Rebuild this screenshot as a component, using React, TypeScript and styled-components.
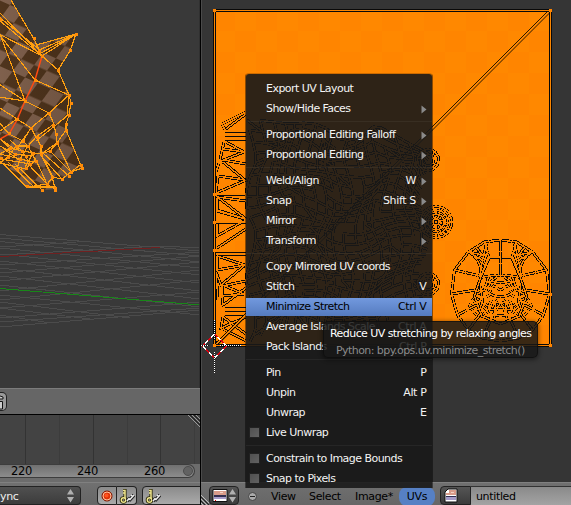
import React from "react";
import styled, { createGlobalStyle } from "styled-components";

const Global = createGlobalStyle`
  body { margin: 0; background: #393939; overflow: hidden; }
  * { box-sizing: border-box; }
`;

const Screen = styled.div`
  position: relative;
  display: grid;
  grid-template-columns: 200px 1fr;
  width: 571px;
  height: 505px;
  overflow: hidden;
  font: 11px/20px "DejaVu Sans", sans-serif;
  letter-spacing: -0.35px;
  color: #000;
  cursor: default;
  white-space: pre;
`;
const LeftColumn = styled.div`
  display: grid;
  grid-template-rows: 388px 27px 67px 23px;
  min-width: 0;
  overflow: hidden;
`;
const RightColumn = styled.div`
  display: grid;
  grid-template-rows: 482px 23px;
  border-left: 1px solid #000;
  min-width: 0;
  overflow: hidden;
`;
const Canvas = styled.svg`
  display: block;
`;
const PlainHeader = styled.div`
  background: #666;
  border-top: 1px solid #7c7c7c;
  border-bottom: 1px solid #000;
  padding-top: 3px;
`;
const CutButton = styled.div`
  width: 7px;
  height: 19px;
  background: #999;
  border: 1px solid #222;
  border-left: 0;
  border-radius: 0 5px 5px 0;
`;
const Timeline = styled.div`
  display: grid;
  grid-template-rows: 49px 14px 4px;
  background: #6c6c6c;
`;
const Scrollbar = styled.div`
  display: flex;
  align-items: center;
  width: 195px;
  height: 14px;
  background: linear-gradient(#707070, #8c8c8c);
  border: 1px solid #3d3d3d;
  border-left: 0;
  border-radius: 0 7px 7px 0;
  font-size: 11.5px;
  line-height: 12px;
`;
const Tick = styled.span<{ $gap: number }>`
  margin-left: ${(p) => p.$gap}px;
  width: 21px;
`;
const Knob = styled.span`
  width: 10px;
  height: 10px;
  margin-left: auto;
  margin-right: 1px;
  border-radius: 50%;
  background: #626262;
  border: 1px solid #4d4d4d;
`;
const Header = styled.div`
  display: flex;
  align-items: flex-start;
  padding-top: 3px;
  background: linear-gradient(#707070, #666);
  border-top: 1px solid #808080;
  overflow: hidden;
`;
const SyncSelect = styled.div`
  flex: none;
  display: flex;
  justify-content: space-between;
  width: 81px;
  height: 19px;
  padding-right: 5px;
  border: 1px solid #222;
  border-left: 0;
  border-radius: 0 4px 4px 0;
  background: linear-gradient(#505050, #3c3c3c);
  color: #eee;
`;
const IconButton = styled.div<{ $w: number; $gap?: number; $left?: boolean; $right?: boolean; $dark?: boolean }>`
  flex: none;
  display: flex;
  align-items: center;
  padding-left: 2px;
  width: ${(p) => p.$w}px;
  height: 19px;
  margin-left: ${(p) => p.$gap ?? 0}px;
  border: 1px solid #222;
  border-left-width: ${(p) => (p.$left ? 1 : 0)}px;
  border-radius: ${(p) => `${p.$left ? 4 : 0}px ${p.$right ? 4 : 0}px ${p.$right ? 4 : 0}px ${p.$left ? 4 : 0}px`};
  background: ${(p) => (p.$dark ? "linear-gradient(#555, #3b3b3b)" : "linear-gradient(#8b8b8b, #aaa)")};
`;
const HeaderLabel = styled.span<{ $w: number }>`
  flex: none;
  width: ${(p) => p.$w}px;
  margin-top: 2px;
  line-height: 18px;
`;
const Collapse = styled.svg`
  flex: none;
  margin-right: 8px;
`;
const ActivePill = styled.span`
  flex: none;
  width: 36px;
  height: 19px;
  margin-top: 1px;
  border-radius: 8px;
  background: #5680c4;
  text-align: center;
  line-height: 20px;
`;
const NameField = styled.div`
  flex: 1;
  height: 19px;
  padding-left: 5px;
  border-top: 1px solid #333;
  background: linear-gradient(#8a8a8a, #a3a3a3);
`;

const Menu = styled.div`
  position: absolute;
  left: 245px;
  top: 73px;
  width: 188px;
  height: 415px;
  padding-top: 5px;
  overflow: hidden;
  border: 1px solid rgba(0, 0, 0, 0.45);
  border-top-color: rgba(0, 0, 0, 0.2);
  border-bottom: 0;
  border-radius: 4px 4px 0 0;
  background: rgba(25, 25, 25, 0.91);
  background-clip: padding-box;
  letter-spacing: -0.54px;
  color: #f4f4f4;
`;
const MenuGroup = styled.div`
  & + & {
    border-top: 1px solid rgba(255, 255, 255, 0.05);
    margin-top: 2px;
    padding-top: 3px;
  }
`;
const MenuRow = styled.div<{ $active?: boolean }>`
  display: flex;
  align-items: center;
  height: ${(p) => (p.$active ? 18 : 20)}px;
  margin: ${(p) => (p.$active ? "1px 0" : "0")};
  color: ${(p) => (p.$active ? "#000" : "inherit")};
  background: ${(p) => (p.$active ? "linear-gradient(#7299de, #557bbf)" : "none")};
`;
const Gutter = styled.span`
  width: 20px;
  padding-left: 3px;
  flex: none;
`;
const Checkbox = styled.span`
  display: block;
  width: 11px;
  height: 11px;
  margin-top: -2px;
  border: 1px solid #222;
  background: linear-gradient(135deg, #505050, #626262);
`;
const Shortcut = styled.span<{ $sub?: boolean }>`
  margin-left: auto;
  margin-right: ${(p) => (p.$sub ? 5 : 5.5)}px;
  letter-spacing: -0.35px;
`;
const Arrow = styled.svg`
  width: 6px;
  height: 9px;
  margin-right: 5px;
`;
const Tooltip = styled.div`
  position: absolute;
  left: 323px;
  top: 321px;
  width: 215px;
  height: 37px;
  padding: 3px 0 0 6px;
  border-radius: 5px;
  border: 1px solid rgba(10, 10, 10, 0.6);
  background: rgba(24, 24, 24, 0.85);
  box-shadow: 0 1px 4px 1px rgba(0, 0, 0, 0.4);
  line-height: 17px;
  letter-spacing: -0.56px;
  color: #fff;
`;
const TooltipCode = styled.div`
  padding-left: 6px;
  color: #8b8b8b;
`;

type Item = { label: string; key?: string; sub?: boolean; check?: boolean; active?: boolean };
const groups: Item[][] = [
  [{ label: "Export UV Layout" }, { label: "Show/Hide Faces", sub: true }],
  [{ label: "Proportional Editing Falloff", sub: true }, { label: "Proportional Editing", sub: true }],
  [
    { label: "Weld/Align", key: "W", sub: true },
    { label: "Snap", key: "Shift S", sub: true },
    { label: "Mirror", sub: true },
    { label: "Transform", sub: true },
  ],
  [
    { label: "Copy Mirrored UV coords" },
    { label: "Stitch", key: "V" },
    { label: "Minimize Stretch", key: "Ctrl V", active: true },
    { label: "Average Islands Scale", key: "Ctrl A" },
    { label: "Pack Islands", key: "Ctrl P" },
  ],
  [
    { label: "Pin", key: "P" },
    { label: "Unpin", key: "Alt P" },
    { label: "Unwrap", key: "E" },
    { label: "Live Unwrap", check: true },
  ],
  [{ label: "Constrain to Image Bounds", check: true }, { label: "Snap to Pixels", check: true }],
];

const headOutline =
  "-2,-2 11,0 34,39 37,45 76,34 70,51 58,70 69,95 71,103 69,115 66,130 82,168 71,172 69,176 62,179 52,177 56,189 42,190 27,187 -2,160";
const headEdges = `M11 0L34 39L42 56M-1 12L42 56M-1 17L40 50M-1 20L41 55M-1 34L42 56M36 45L76 34M39 50L76 34M41 53L76 34M42 56L76 34
M76 34L70 51L58 70L42 56M70 51L73 42M58 70L69 95L71 103L69 115L66 124L66 130L82 168M35 80L69 95M69 95L67 116M69 95L49 113M-1 34L35 80
M0 34L25 101M-1 84L25 101M-1 97L25 101L49 113L54 124L56 134L57 143L41 154M49 113L31 128L36 137L54 124M0 108L17 119L31 128L23 141L9 134
M-1 122L9 134M17 119L0 131M31 128L16 150L0 139M36 137L41 146L41 154M36 137L28 146L16 146M67 116L36 141M66 130L57 143L71 172M57 143L50 151L71 172M50 151L41 154L53 177
M71 172L82 168M80 165L71 172M71 172L62 179L52 177L55 188M69 176L44 154M62 179L41 156M52 177L41 154M53 177L47 184L35 158M47 184L28 164M42 190L15 164M35 188L8 162M27 187L-1 160
M27 187L56 187M0 161L26 187M56 190L47 184L28 187M0 139L10 148L23 151L33 153L41 154M0 146L15 154L31 156M0 154L20 159L34 162M0 159L19 162L30 164M0 163L26 169M10 148L0 154M16 146L8 157L0 163M23 141L28 146L20 159L17 169M33 153L25 167M36 160L26 168M28 146L37 163M10 140L22 151L31 165M4 149L19 160`;
const headDots: number[][] = [
  [76, 34], [34, 38], [39, 51], [42, 56], [70, 50], [58, 70], [69, 95], [71, 103], [69, 115], [66, 124], [66, 130],
  [35, 80], [25, 101], [49, 113], [53, 125], [56, 134], [57, 143], [31, 128], [37, 137], [17, 119], [9, 133],
  [23, 141], [16, 146], [28, 146], [10, 148], [41, 146], [22, 151], [33, 153], [41, 154], [50, 151], [15, 154],
  [26, 156], [8, 157], [20, 159], [36, 161], [30, 164], [26, 168], [17, 169], [82, 168], [81, 165], [71, 172],
  [69, 176], [62, 179], [52, 177], [47, 184], [55, 188], [55, 190], [42, 190], [27, 186], [0, 19], [1, 158],
];

const gridLines = [
  "M0 234.5L200 251", "M0 238L200 256", "M0 241.5L200 262", "M0 248L200 268", "M0 254L200 275", "M0 261L200 283",
  "M0 268L200 291", "M0 276L200 299", "M0 285L200 307", "M0 295L200 315", "M0 302L130 318", "M0 308L90 319", "M0 315L50 323",
  "M0 247L50 244L90 241", "M0 255L160 246L200 248", "M0 265L200 252", "M0 273L200 256", "M0 281L200 262",
  "M0 291L200 270", "M0 300L200 280", "M0 308L200 292", "M0 318L200 302", "M0 327L200 310", "M0 322L200 308",
].join("");

const fan = `M222 124L246 112M226 129L246 114M222 124L225 130M225 131H246M225 135H246M225 139H246M224 142L220 160
M223 149L244 152L226 142M221 161L244 152M223 160L246 164M223 162L245 180L218 176M219 163L216 172M218 176L216 193L244 181
M214 194H246M217 197L246 201M216 196L246 219L217 210V198M214 222H246M217 224V236L246 220M217 211L245 219M217 248L246 229M214 251H246M214 254H246
M217 256L245 265L217 270V256M216 272L221 285L244 266M220 284L244 294L222 296V286L246 281M222 296L223 305L246 288
M225 306H246M225 310H246M225 314H246M223 317L221 328L246 317M223 317L246 334M214 346L246 315M223 329L246 341M216 272L218 300`;

function wobble(x: number, y: number): [number, number] {
  return [x + 5 * Math.sin(y / 13 + x / 29) + 2 * Math.sin(x / 7), y + 6 * Math.sin(x / 17) + 3 * Math.cos(y / 9 + x / 12)];
}
function buildIsland(): string {
  const parts: string[] = [];
  const cols = 18;
  const rows = 24;
  const at = (i: number, j: number) => {
    const x = 253 + i * 9.6;
    const spread = 1 - 0.12 * Math.sin((i / cols) * Math.PI) - (i > 13 ? (i - 13) * 0.07 : 0);
    return wobble(x, 229 + (j - rows / 2) * 9.2 * spread).map((v) => v.toFixed(1)).join(" ");
  };
  for (let i = 0; i < cols; i++)
    for (let j = 0; j < rows; j++) {
      if ((i * 7 + j * 3) % 11 !== 0) parts.push(`M${at(i, j)}L${at(i + 1, j)}`);
      if ((i * 5 + j * 2) % 9 !== 0) parts.push(`M${at(i, j)}L${at(i, j + 1)}`);
      if ((i * 3 + j * 5) % 13 === 0) parts.push(`M${at(i, j)}L${at(i + 1, j + 1)}`);
    }
  return parts.join("");
}
function buildRosette(cx: number, cy: number, radii: number[], spokes: number): string {
  const parts: string[] = [];
  const pt = (r: number, k: number) => {
    const a = (k / spokes) * Math.PI * 2;
    return `${(cx + r * Math.sin(a)).toFixed(1)} ${(cy - r * Math.cos(a)).toFixed(1)}`;
  };
  radii.forEach((r, n) => {
    for (let k = 0; k < spokes; k++) {
      parts.push(`M${pt(r, k)}L${pt(r, k + 1)}`);
      if (n > 0 && (k + n) % 2 === 0) parts.push(`M${pt(radii[n - 1], k)}L${pt(r, k)}`);
    }
  });
  return parts.join("");
}

const faceHalf = `M0 -50L16 -48L32 -38L46 -20L49 4L43 25L32 40L18 48L0 51M0 -33L11 -33L20 -12L26 6L19 26L0 34M0 -50V-15M16 -48L12 -34L20 -12M14 -46L18 -30L21 -13
M32 -38L17 -29M32 -38L18 -35M25 -43L18 -35L24 -31L31 -40M23 -30L18 -18M46 -20L20 -14M49 4L25 0M43 25L24 15M32 40L20 24M18 48L10 30`;
const faceDetail = `M0 -15L12 -14L20 -12M12 -13L16 0L26 6M0 -7L9 -9L15 1L10 11L0 13M4 -13L9 -9M0 0L7 -4L12 4M0 7L8 5L15 1M3 10L8 17L17 14L26 6
M0 20L12 19L19 26M0 26L10 25L17 17M10 11L12 19M5 13L6 28M20 -4L18 12L22 21M0 13L5 22L12 31M22 17L28 10L31 16L24 25`;

const rosettes = [
  buildRosette(436, 222, [3, 8, 12, 16], 14),
  buildRosette(428, 160, [6, 11], 9),
  buildRosette(428, 284, [6, 11], 9),
].join("");

const DoubleStroke = ({ d, transform, dash }: { d: string; transform?: string; dash?: string }) => (
  <g transform={transform} fill="none" shapeRendering="crispEdges" strokeDasharray={dash}>
    <path d={d} stroke="#090909" strokeWidth="3" />
    <path d={d} stroke="#fb8500" strokeWidth="1.4" strokeDasharray="none" />
  </g>
);

const Viewport3D = () => (
  <Canvas width="200" height="388" viewBox="0 0 200 388">
    <defs>
      <pattern id="fur" width="28" height="30" patternUnits="userSpaceOnUse" patternTransform="translate(10 5) rotate(24) skewX(-12)">
        <path d="M0 0H28V30H0Z" fill="#50351d" />
        <path d="M0 0H14V15H0ZM14 15H28V30H14Z" fill="#80614d" />
      </pattern>
      <linearGradient id="furShade" x2="1">
        <stop offset="0" stopColor="#000" stopOpacity="0" />
        <stop offset="1" stopColor="#221409" stopOpacity=".2" />
      </linearGradient>
    </defs>
    <path d="M0 0H200V388H0Z" fill="#393939" />
    <path d={gridLines} fill="none" stroke="#4b4b4b" shapeRendering="crispEdges" />
    <path d="M0 256.5L160 247.5" stroke="#702020" shapeRendering="crispEdges" />
    <path d="M0 288.5L200 305" stroke="#188718" shapeRendering="crispEdges" />
    <polygon points={headOutline} fill="url(#fur)" />
    <polygon points={headOutline} fill="url(#furShade)" />
    <path d={headEdges} fill="none" stroke="#ffa010" strokeWidth="1.15" shapeRendering="crispEdges" />
    <path d="M42 56L35 80L25 101L17 120L9 134L0 139" fill="none" stroke="#ff4a12" strokeWidth="1.5" />
    {headDots.map(([x, y]) => (
      <rect key={`${x}-${y}`} x={x - 1} y={y - 1} width="3" height="3" fill="#ff8c08" />
    ))}
    <path d="M199.5 0V388" stroke="#303030" />
  </Canvas>
);

const UVCanvas = () => (
  <Canvas width="370" height="482" viewBox="201 0 370 482">
    <defs>
      <pattern id="check" width="42" height="42" patternUnits="userSpaceOnUse" x="214" y="10">
        <path d="M0 0H21V21H0ZM21 21H42V42H21Z" fill="#ff7800" opacity=".16" />
      </pattern>
    </defs>
    <path d="M201 0H571V482H201Z" fill="#353535" />
    <path d="M201.5 0V482" stroke="#4a4a4a" />
    <path d="M214 10H551V346H214Z" fill="#ff8800" />
    <path d="M214 10H551V346H214Z" fill="url(#check)" />
    <DoubleStroke d={fan + buildIsland()} />
    <DoubleStroke d={rosettes} dash="3 1.5" />
    <path d="M549 10L213 346M551.5 11L215.5 347" stroke="#100a00" strokeWidth="0.9" />
    {["translate(500.5 290)", "translate(500.5 290) scale(-1 1)"].map((t) => (
      <React.Fragment key={t}>
        <DoubleStroke d={faceDetail} transform={t} dash="4 2" />
        <DoubleStroke d={faceHalf} transform={t} dash="11 1" />
      </React.Fragment>
    ))}
    <DoubleStroke d="M214.5 10.5H550.5V345.5H214.5Z" />
    {[[214, 10], [550, 10], [550, 345], [214, 345], [214, 194], [214, 222], [214, 250], [550, 294]].map(([x, y]) => (
      <rect key={`${x}-${y}`} x={x - 1} y={y - 1} width="3" height="3" fill="#ff8400" />
    ))}
    <g fill="none" shapeRendering="crispEdges">
      <path d="M214.5 334L226.5 346L214.5 358L202.5 346Z" stroke="#fff" />
      <path d="M214.5 334L226.5 346L214.5 358L202.5 346Z" stroke="#e00010" strokeDasharray="4.2 4.2" />
      <path d="M214.5 320V340M214.5 352V373M201 345.5H209M220 345.5H241" stroke="#111" />
      <path d="M214.5 320V340M214.5 352V373M201 345.5H209M220 345.5H241" stroke="#fff" strokeDasharray="1 1" />
    </g>
  </Canvas>
);

const TimelineGrid = () => (
  <Canvas width="200" height="49" viewBox="0 0 200 49">
    <path d="M0 0H200V49H0Z" fill="#434343" />
    <path d="M25.5 0V49M93.5 0V49M160.5 0V49" stroke="#333" />
    <path d="M59.5 0V49M127.5 0V49M194.5 0V49" stroke="#3c3c3c" />
    <path d="M188 0L200 12M192 0L200 8M196 0L200 4" stroke="#999" />
    <path d="M190 0L200 10M194 0L200 6" stroke="#222" />
  </Canvas>
);

const KeyIcon = () => (
  <svg width="16" height="16" viewBox="0 0 16 16" fill="none">
    <path d="M4 2.5H6V10" stroke="#2c2908" strokeWidth="3.2" />
    <circle cx="4.5" cy="12" r="2.3" stroke="#2c2908" strokeWidth="3" />
    <path d="M4 2.5H6V10M6 5H4" stroke="#f0e68e" strokeWidth="1.5" />
    <circle cx="4.5" cy="12" r="2.2" stroke="#f0e68e" strokeWidth="1.4" />
    <path d="M8 13L10 11L11 11.5L15 7" stroke="#222" strokeWidth="3.6" />
    <path d="M8 13L10 10.5L11 11.5L15 7M12 7L14 9" stroke="#eee" strokeWidth="1.5" />
  </svg>
);
const RecordIcon = () => (
  <svg width="14" height="14" viewBox="0 0 14 14">
    <circle cx="7" cy="7" r="5" fill="#df3208" stroke="#7b1600" />
    <circle cx="7" cy="7" r="4" fill="none" stroke="#ffc3a0" />
    <circle cx="6.5" cy="6.5" r="2" fill="#ff5420" />
  </svg>
);
const UpDown = () => (
  <svg width="9" height="17" viewBox="0 0 9 17" fill="#b0b0b0">
    <path d="M1 7.5L4.5 2L8 7.5ZM1 10L4.5 15.500L8 10Z" />
  </svg>
);
const ImageIcon = ({ page }: { page?: boolean }) => (
  <svg width="16" height="15" viewBox="0 0 16 15">
    <path d={page ? "M5 1H14V14H2V4Z" : "M1 1.5H15V13.5H1Z"} fill="#fff" stroke="#111" />
    <path d={page ? "M6 2H13V7H3V5H6Z" : "M2 3H14V7H2Z"} fill="#d99c8a" />
    <path d={page ? "M3 8H13V9H3Z" : "M2 7H14V9H2Z"} fill="#343052" />
    <path d={page ? "M3 9H13V12H3Z" : "M2 9H14V11H2Z"} fill="#a59bc8" />
    {!page && <path d="M3 12H4V13H3Z" fill="#e00" />}
    <path d="M8 4H11V5H8Z" fill="#f3d2c4" />
  </svg>
);

export default function App() {
  return (
    <>
      <Global />
      <Screen>
        <LeftColumn>
          <Viewport3D />
          <PlainHeader>
            <CutButton>
              <Canvas width="5" height="17" viewBox="0 0 5 17">
                <path d="M0 3L3 4V6H0M0 8.5H2.5V16H0" fill="#ccc" stroke="#111" />
              </Canvas>
            </CutButton>
          </PlainHeader>
          <Timeline>
            <TimelineGrid />
            <Scrollbar>
              <Tick $gap={11}>220</Tick>
              <Tick $gap={45}>240</Tick>
              <Tick $gap={46}>260</Tick>
              <Knob />
            </Scrollbar>
          </Timeline>
          <Header>
            <SyncSelect>
              ync
              <UpDown />
            </SyncSelect>
            <IconButton $w={20} $gap={16} $left>
              <RecordIcon />
            </IconButton>
            <IconButton $w={20} $right>
              <KeyIcon />
            </IconButton>
            <IconButton $w={62} $gap={5} $left>
              <KeyIcon />
            </IconButton>
          </Header>
        </LeftColumn>
        <RightColumn>
          <UVCanvas />
          <Header>
            <svg width="8" height="20" viewBox="0 0 8 20">
              <path d="M0 9L9 18M0 13L7 20M0 17L3 20" stroke="#bbb" />
              <path d="M0 11L8 19M0 15L5 20" stroke="#222" />
            </svg>
            <IconButton $w={30} $left $right $dark>
              <ImageIcon />
              <UpDown />
            </IconButton>
            <Collapse width="24" height="20" viewBox="0 0 24 20">
              <circle cx="13.500" cy="10.500" r="4" fill="#aaa" stroke="#444" />
              <path d="M11 10.5H16" stroke="#222" />
            </Collapse>
            <HeaderLabel $w={38}>View</HeaderLabel>
            <HeaderLabel $w={46}>Select</HeaderLabel>
            <HeaderLabel $w={44}>Image*</HeaderLabel>
            <ActivePill>UVs</ActivePill>
            <IconButton $w={31} $gap={5} $left $dark>
              <ImageIcon page />
            </IconButton>
            <NameField>untitled</NameField>
          </Header>
        </RightColumn>
        <Menu>
          {groups.map((items, g) => (
            <MenuGroup key={g}>
              {items.map((it) => (
                <MenuRow key={it.label} $active={it.active}>
                  <Gutter>{it.check && <Checkbox />}</Gutter>
                  <span>{it.label}</span>
                  <Shortcut $sub={it.sub}>{it.key}</Shortcut>
                  {it.sub && (
                    <Arrow viewBox="0 0 6 9">
                      <path d="M.5 .5L5.5 4.5L.5 8.5Z" fill="#8a8a8a" />
                    </Arrow>
                  )}
                </MenuRow>
              ))}
            </MenuGroup>
          ))}
        </Menu>
        <Tooltip>
          <div>Reduce UV stretching by relaxing angles</div>
          <TooltipCode>Python: bpy.ops.uv.minimize_stretch()</TooltipCode>
        </Tooltip>
      </Screen>
    </>
  );
}
